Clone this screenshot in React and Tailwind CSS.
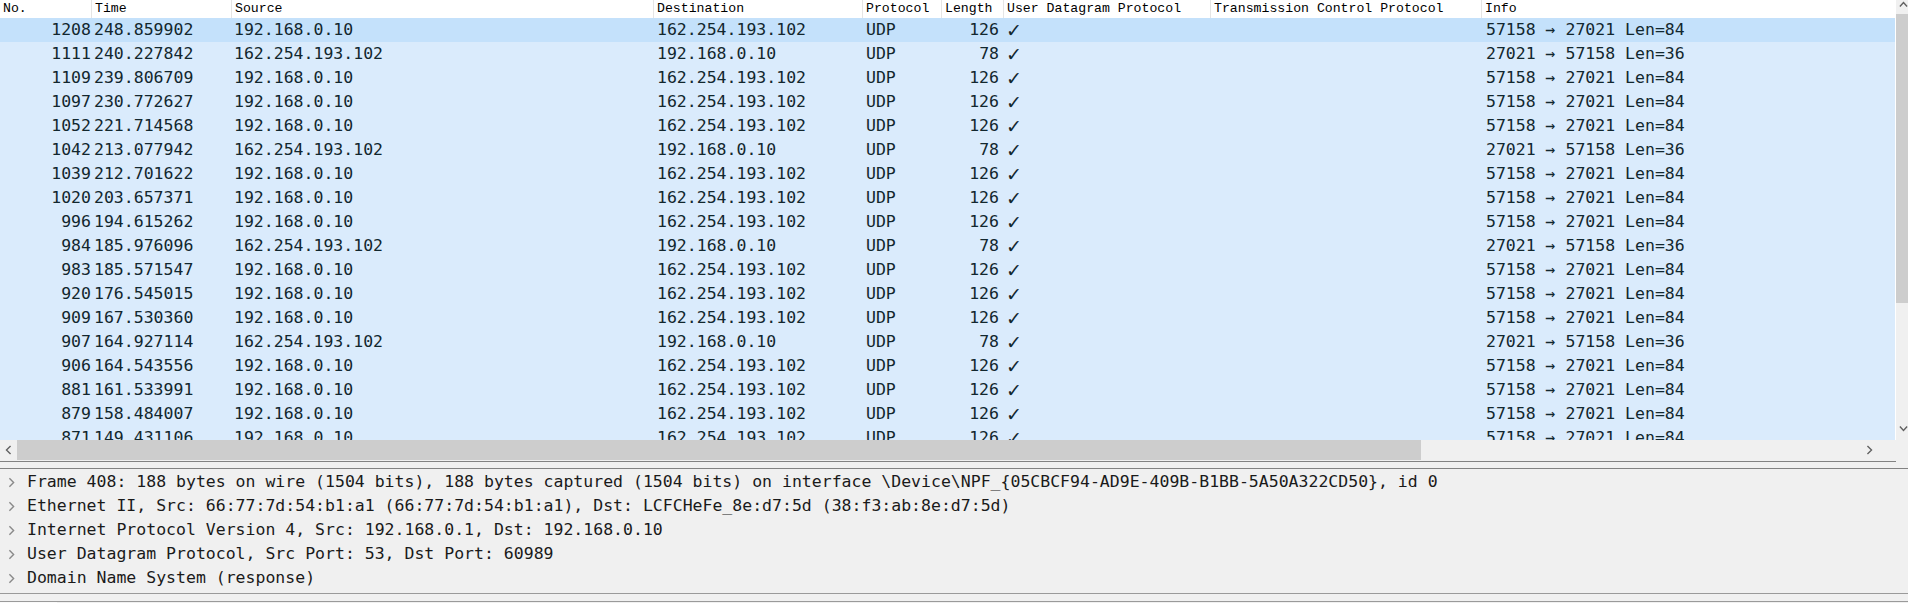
import React from "react";

const rows = [
  ["1208", "248.859902", "192.168.0.10", "162.254.193.102", "126", "57158 → 27021 Len=84"],
  ["1111", "240.227842", "162.254.193.102", "192.168.0.10", "78", "27021 → 57158 Len=36"],
  ["1109", "239.806709", "192.168.0.10", "162.254.193.102", "126", "57158 → 27021 Len=84"],
  ["1097", "230.772627", "192.168.0.10", "162.254.193.102", "126", "57158 → 27021 Len=84"],
  ["1052", "221.714568", "192.168.0.10", "162.254.193.102", "126", "57158 → 27021 Len=84"],
  ["1042", "213.077942", "162.254.193.102", "192.168.0.10", "78", "27021 → 57158 Len=36"],
  ["1039", "212.701622", "192.168.0.10", "162.254.193.102", "126", "57158 → 27021 Len=84"],
  ["1020", "203.657371", "192.168.0.10", "162.254.193.102", "126", "57158 → 27021 Len=84"],
  ["996", "194.615262", "192.168.0.10", "162.254.193.102", "126", "57158 → 27021 Len=84"],
  ["984", "185.976096", "162.254.193.102", "192.168.0.10", "78", "27021 → 57158 Len=36"],
  ["983", "185.571547", "192.168.0.10", "162.254.193.102", "126", "57158 → 27021 Len=84"],
  ["920", "176.545015", "192.168.0.10", "162.254.193.102", "126", "57158 → 27021 Len=84"],
  ["909", "167.530360", "192.168.0.10", "162.254.193.102", "126", "57158 → 27021 Len=84"],
  ["907", "164.927114", "162.254.193.102", "192.168.0.10", "78", "27021 → 57158 Len=36"],
  ["906", "164.543556", "192.168.0.10", "162.254.193.102", "126", "57158 → 27021 Len=84"],
  ["881", "161.533991", "192.168.0.10", "162.254.193.102", "126", "57158 → 27021 Len=84"],
  ["879", "158.484007", "192.168.0.10", "162.254.193.102", "126", "57158 → 27021 Len=84"],
  ["871", "149.431106", "192.168.0.10", "162.254.193.102", "126", "57158 → 27021 Len=84"],
];

const details = [
  "Frame 408: 188 bytes on wire (1504 bits), 188 bytes captured (1504 bits) on interface \\Device\\NPF_{05CBCF94-AD9E-409B-B1BB-5A50A322CD50}, id 0",
  "Ethernet II, Src: 66:77:7d:54:b1:a1 (66:77:7d:54:b1:a1), Dst: LCFCHeFe_8e:d7:5d (38:f3:ab:8e:d7:5d)",
  "Internet Protocol Version 4, Src: 192.168.0.1, Dst: 192.168.0.10",
  "User Datagram Protocol, Src Port: 53, Dst Port: 60989",
  "Domain Name System (response)",
];

const GRID =
  "grid grid-cols-[91px_140px_422px_209px_79px_62px_207px_271px_1fr]";

const mono = "font-['DejaVu_Sans_Mono',monospace]";

function Chevron({ dir = "right", className = "", color = "#606060" }) {
  const pts = {
    right: "1.5,1 6,5.5 1.5,10",
    left: "6,1 1.5,5.5 6,10",
    up: "1,6 5,1.5 9,6",
    down: "1,1.5 5,6 9,1.5",
  }[dir];
  const vb = dir === "up" || dir === "down" ? "0 0 10 7.5" : "0 0 7.5 11";
  return (
    <svg viewBox={vb} className={className} fill="none">
      <polyline points={pts} stroke={color} strokeWidth="1.5" />
    </svg>
  );
}

function Header() {
  const cols = [
    "No.",
    "Time",
    "Source",
    "Destination",
    "Protocol",
    "Length",
    "User Datagram Protocol",
    "Transmission Control Protocol",
    "Info",
  ];
  return (
    <div
      className={`${GRID} h-[18px] bg-white font-['Liberation_Mono',monospace] text-[13.2px] leading-[18px] text-[#000]`}
    >
      {cols.map((c, i) => (
        <div
          key={c}
          className={
            i === 0
              ? "pl-[3px] whitespace-nowrap overflow-hidden"
              : "pl-[3px] border-l border-[#e5e5e5] whitespace-nowrap overflow-hidden"
          }
        >
          {c}
        </div>
      ))}
    </div>
  );
}

function Row({ r, selected }) {
  return (
    <div
      className={`${GRID} h-[24px] items-center ${mono} text-[16.5px] text-[#12272e] whitespace-nowrap ${
        selected ? "bg-[#c4e1fb]" : "bg-[#daebfc]"
      }`}
    >
      <div className="text-right">{r[0]}</div>
      <div className="pl-[3px]">{r[1]}</div>
      <div className="pl-[3px]">{r[2]}</div>
      <div className="pl-[4px]">{r[3]}</div>
      <div className="pl-[4px]">UDP</div>
      <div className="text-right pr-[4px]">{r[4]}</div>
      <div className="pl-[3px] font-['DejaVu_Sans',sans-serif] text-[19px] leading-[24px] font-bold">✓</div>
      <div></div>
      <div className="pl-[5px]">{r[5]}</div>
    </div>
  );
}

export default function App() {
  return (
    <div className="w-[1908px] h-[603px] overflow-hidden bg-[#f0f0f0] flex flex-col">
      {/* packet list */}
      <div className="flex h-[440px]">
        <div className="w-[1896px] h-[440px] bg-white overflow-hidden flex flex-col pr-px">
          <Header />
          {rows.map((r, i) => (
            <Row key={r[0]} r={r} selected={i === 0} />
          ))}
        </div>
        <div className="w-[12px] h-[440px] bg-[#f0f0f0] flex flex-col">
          <div className="h-[14px] flex items-start justify-end pt-[1px]">
            <Chevron dir="up" className="w-[9px] h-[7px]" />
          </div>
          <div className="h-[289px] bg-[#cdcdcd]"></div>
          <div className="flex-1"></div>
          <div className="h-[17px] flex items-start justify-end pt-[2px]">
            <Chevron dir="down" className="w-[9px] h-[7px]" />
          </div>
        </div>
      </div>
      {/* horizontal scrollbar */}
      <div className="flex h-[21px]">
        <div className="w-[1896px] flex items-stretch">
          <div className="w-[17px] flex items-center justify-center pb-px">
            <Chevron dir="left" className="w-[7px] h-[10px]" />
          </div>
          <div className="w-[1404px] bg-[#cdcdcd] mb-px"></div>
          <div className="flex-1"></div>
          <div className="w-[30px] flex items-center justify-start pb-px">
            <Chevron dir="right" className="w-[7px] h-[10px]" />
          </div>
        </div>
        <div className="flex-1"></div>
      </div>
      {/* splitter */}
      <div className="h-px w-[1896px] bg-[#828282]"></div>
      <div className="h-[6px]"></div>
      <div className="h-px w-full bg-[#828282]"></div>
      {/* details */}
      <div className="h-[124px] flex flex-col bg-[#f0f0f0] pt-px">
        {details.map((d) => (
          <div
            key={d}
            className={`h-[24px] flex items-center ${mono} text-[16.5px] text-[#1a1a1a] whitespace-nowrap`}
          >
            <div className="w-[23px] flex items-center justify-center">
              <Chevron dir="right" className="w-[7px] h-[11px]" color="#8a8a8a" />
            </div>
            <div className="pl-[4px]">{d}</div>
          </div>
        ))}
      </div>
      <div className="h-px w-full bg-[#9a9a9a]"></div>
      <div className="h-[7px]"></div>
      <div className="h-px w-full bg-[#9a9a9a]"></div>
      <div className="flex-1 flex">
        <div className="w-[57px] bg-[#fafafa]"></div>
      </div>
    </div>
  );
}
